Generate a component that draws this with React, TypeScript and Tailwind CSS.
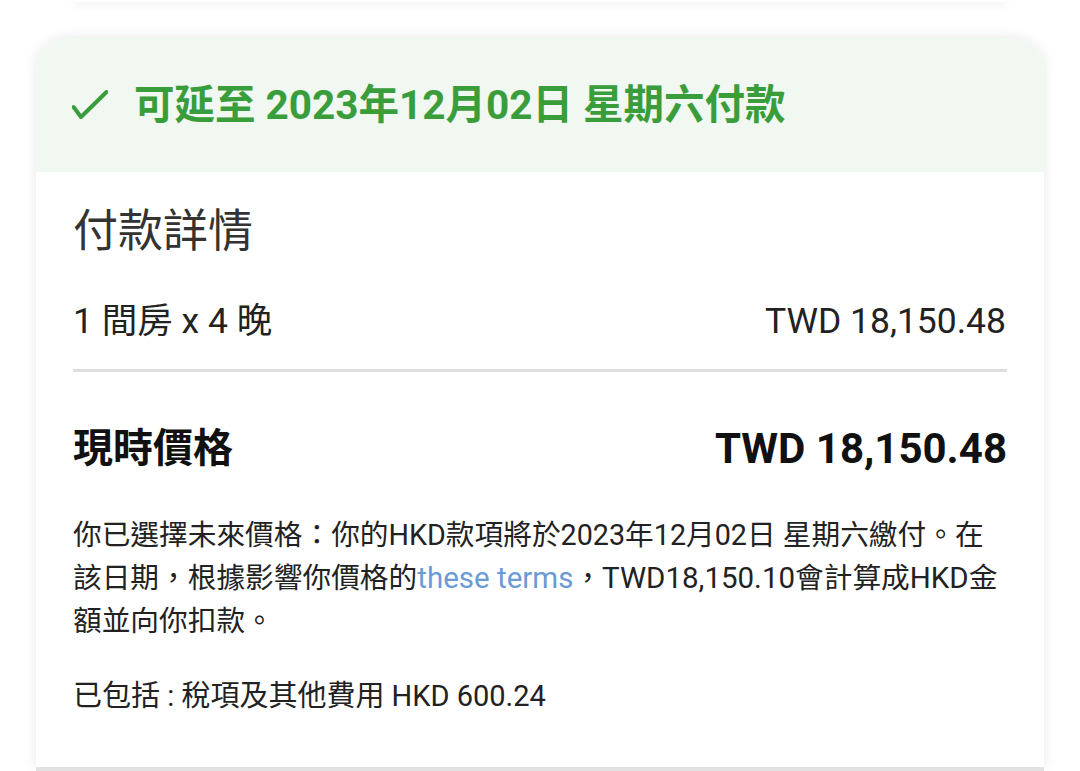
import React from "react";

const font = { fontFamily: 'Roboto, "Noto Sans CJK TC", sans-serif' };

export default function App() {
  return (
    <div className="w-[1080px] h-[771px] overflow-hidden bg-white relative" style={font}>
      {/* previous card bottom edge */}
      <div className="mx-[73px] h-[2px] bg-white rounded-b-[24px] shadow-[0_2px_8px_rgba(0,0,0,0.16)]" />

      {/* main card */}
      <div className="mx-[36px] mt-[36px] h-[729px] bg-white rounded-t-[32px] overflow-hidden shadow-[0_0_14px_rgba(0,0,0,0.10)] flex flex-col">
        <div className="h-[134px] bg-[#f1f7f1] flex items-center pl-[36px] shrink-0">
          <svg width="36" height="30" viewBox="0 0 36 30" className="mr-[26px]" fill="none">
            <path d="M1.5 17 L9 27 L34.5 2" stroke="#3a9d3c" strokeWidth="4" strokeLinecap="round" strokeLinejoin="round" />
          </svg>
          <span className="text-[40.5px] font-bold text-[#3a9d3c] leading-none">可延至 2023年12月02日 星期六付款</span>
        </div>

        <div className="px-[37px] flex flex-col text-[#222]">
          <div className="pt-[32px] text-[45px] leading-[56px] text-[#333]">付款詳情</div>

          <div className="mt-[39px] flex justify-between items-center text-[35.5px] leading-[44px] text-[#222] pr-[1px]">
            <span>1 間房 x 4 晚</span>
            <span>TWD 18,150.48</span>
          </div>

          <div className="mt-[26px] h-[3px] bg-[#dedede]" />

          <div className="mt-[51px] flex justify-between items-center leading-[52px] font-bold text-[#111]">
            <span className="text-[40px]">現時價格</span>
            <span className="text-[42px]">TWD 18,150.48</span>
          </div>

          <p className="mt-[39px] text-[28.7px] leading-[43px] text-[#222] whitespace-nowrap">
            你已選擇未來價格：你的HKD款項將於2023年12月02日 星期六繳付。在
            <br />
            該日期，根據影響你價格的<span className="text-[#6a9bd6] text-[29.5px]">these terms</span>，<span className="text-[29.5px]">TWD18,150.10</span>會計算成<span className="text-[29.5px]">HKD</span>金
            <br />
            額並向你扣款。
          </p>

          <div className="mt-[32px] text-[29px] leading-[43px] text-[#222]">已包括 : 稅項及其他費用 HKD 600.24</div>
        </div>
      </div>
      <div className="mx-[36px] h-[4px] bg-[#e2e2e2]" />
    </div>
  );
}
